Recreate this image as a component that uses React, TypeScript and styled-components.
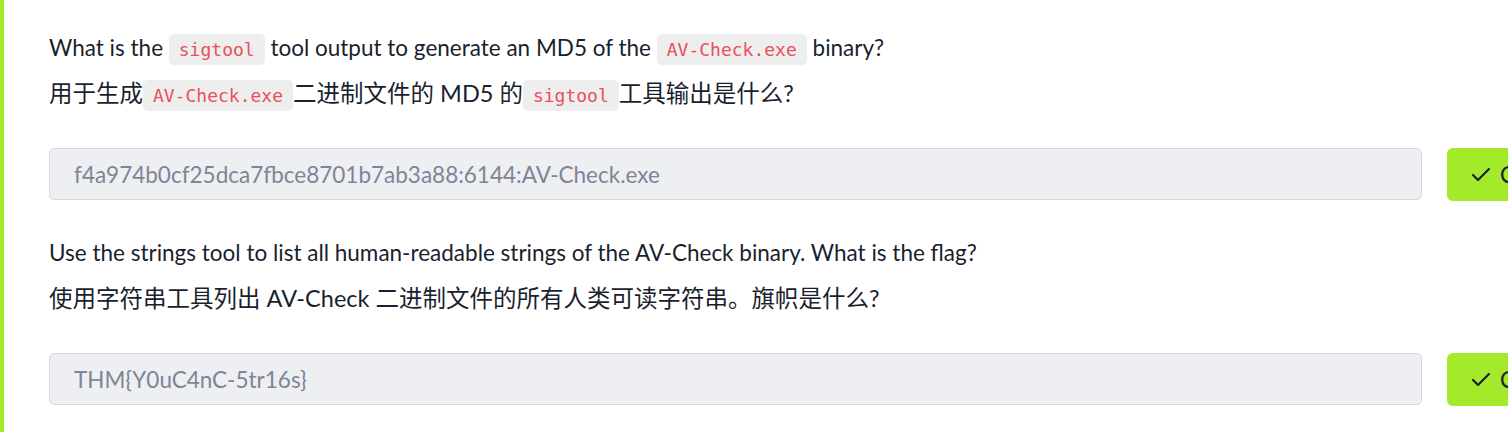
import React from "react";
import styled, { createGlobalStyle } from "styled-components";
import { Check } from "lucide-react";

const GlobalStyle = createGlobalStyle`
  html, body {
    margin: 0;
    padding: 0;
    background: #ffffff;
    overflow: hidden;
  }
  body {
    font-family: "Lato", "Noto Sans CJK SC", sans-serif;
    color: #1c2130;
  }
`;

const Card = styled.section`
  box-sizing: border-box;
  width: 1700px;
  min-height: 432px;
  border-left: 4px solid #a3ea2a;
  padding: 31px 53px 0 45px;
  background: #ffffff;
`;

const Question = styled.div`
  margin-bottom: 35px;
`;

const Prompt = styled.p`
  margin: 0;
  font-family: "Lato", "Noto Sans CJK SC", sans-serif;
  font-size: 22.5px;
  line-height: 34px;
  color: #1a1f2e;
  white-space: nowrap;
`;

const Translation = styled.p`
  margin: 11px 0 0;
  font-family: "Lato", "Noto Sans CJK SC", sans-serif;
  font-size: 23.5px;
  line-height: 34px;
  color: #1a1f2e;
  white-space: nowrap;
`;

const Code = styled.code`
  font-family: "DejaVu Sans Mono", monospace;
  font-size: 18px;
  line-height: 18px;
  color: #e9505a;
  background: #eeeeee;
  border-radius: 5px;
  padding: 5px 10px;
`;

const AnswerRow = styled.div`
  margin-top: 38px;
  display: grid;
  grid-template-columns: 1fr 200px;
  gap: 25px;
`;

const AnswerInput = styled.input`
  box-sizing: border-box;
  height: 52px;
  width: 100%;
  margin: 0;
  padding: 0 24px;
  border: 1px solid #d5d8de;
  border-radius: 5px;
  background: #edeff3;
  font-family: "Lato", sans-serif;
  font-size: 22.5px;
  color: #7d8596;
  outline: none;
`;

const SubmitButton = styled.button`
  box-sizing: border-box;
  height: 53px;
  display: flex;
  align-items: center;
  gap: 7px;
  padding: 0 0 0 22px;
  border: none;
  border-radius: 6px;
  background: #a3ea2a;
  color: #1a1f2e;
  font-family: "Lato", sans-serif;
  font-size: 22.5px;
  white-space: nowrap;
  overflow: visible;
  cursor: pointer;

  svg {
    flex-shrink: 0;
  }
`;

type Item = {
  prompt: React.ReactNode;
  translation: React.ReactNode;
  answer: string;
};

const items: Item[] = [
  {
    prompt: (
      <>
        What is the <Code>sigtool</Code> tool output to generate an MD5 of the{" "}
        <Code>AV-Check.exe</Code> binary?
      </>
    ),
    translation: (
      <>
        用于生成<Code>AV-Check.exe</Code>二进制文件的 MD5 的<Code>sigtool</Code>工具输出是什么?
      </>
    ),
    answer: "f4a974b0cf25dca7fbce8701b7ab3a88:6144:AV-Check.exe",
  },
  {
    prompt: <>Use the strings tool to list all human-readable strings of the AV-Check binary. What is the flag?</>,
    translation: <>使用字符串工具列出 AV-Check 二进制文件的所有人类可读字符串。旗帜是什么?</>,
    answer: "THM{Y0uC4nC-5tr16s}",
  },
];

export default function App() {
  return (
    <>
      <GlobalStyle />
      <Card>
        {items.map((it, i) => (
          <Question key={i}>
            <Prompt>{it.prompt}</Prompt>
            <Translation>{it.translation}</Translation>
            <AnswerRow>
              <AnswerInput readOnly value={it.answer} />
              <SubmitButton>
                <Check size={24} strokeWidth={2.2} />
                Correct Answer
              </SubmitButton>
            </AnswerRow>
          </Question>
        ))}
      </Card>
    </>
  );
}
